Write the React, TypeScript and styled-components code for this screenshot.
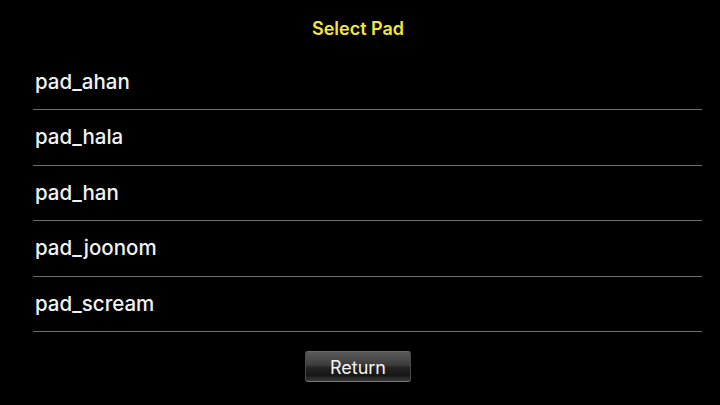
import React from "react";
import styled, { createGlobalStyle } from "styled-components";

const GlobalStyle = createGlobalStyle`
  html, body {
    margin: 0;
    padding: 0;
    background: #000;
  }
  body {
    font-family: Inter, "Liberation Sans", Arial, sans-serif;
  }
`;

const Screen = styled.div`
  width: 716px;
  height: 405px;
  background: #000;
  display: flex;
  flex-direction: column;
`;

const Title = styled.div`
  height: 54.5px;
  display: flex;
  justify-content: center;
  align-items: flex-start;
  padding-top: 18px;
  box-sizing: border-box;
  color: #f3e734;
  font-size: 18px;
  line-height: 22px;
  font-weight: 600;
`;

const List = styled.div`
  margin: 0 14px 0 33px;
  display: flex;
  flex-direction: column;
`;

const Row = styled.div`
  height: 55.5px;
  box-sizing: border-box;
  border-bottom: 1px solid #6e6e6e;
  display: flex;
  align-items: center;
  padding-left: 2px;
  padding-bottom: 1px;
  color: #f2f2f2;
  font-size: 20.5px;
  font-weight: 500;
`;

const Footer = styled.div`
  display: flex;
  justify-content: center;
  padding-top: 19px;
`;

const ReturnButton = styled.button`
  width: 106px;
  height: 31px;
  box-sizing: border-box;
  border: 1px solid #4a4a4a;
  border-top-color: #6a6a6a;
  border-bottom-color: #777;
  border-radius: 3px;
  background: linear-gradient(
    to bottom,
    #5a5a5a 0%,
    #3c3c3c 45%,
    #222 55%,
    #161616 80%,
    #3a3a3a 100%
  );
  color: #f4f4f4;
  font-family: Inter, "Liberation Sans", Arial, sans-serif;
  font-size: 18px;
  font-weight: 400;
  padding: 2px 0 0 0;
  line-height: 27px;
  cursor: pointer;
`;

const pads = ["pad_ahan", "pad_hala", "pad_han", "pad_joonom", "pad_scream"];

export default function App() {
  return (
    <>
      <GlobalStyle />
      <Screen>
        <Title>Select Pad</Title>
        <List>
          {pads.map((p) => (
            <Row key={p}>{p}</Row>
          ))}
        </List>
        <Footer>
          <ReturnButton>Return</ReturnButton>
        </Footer>
      </Screen>
    </>
  );
}
